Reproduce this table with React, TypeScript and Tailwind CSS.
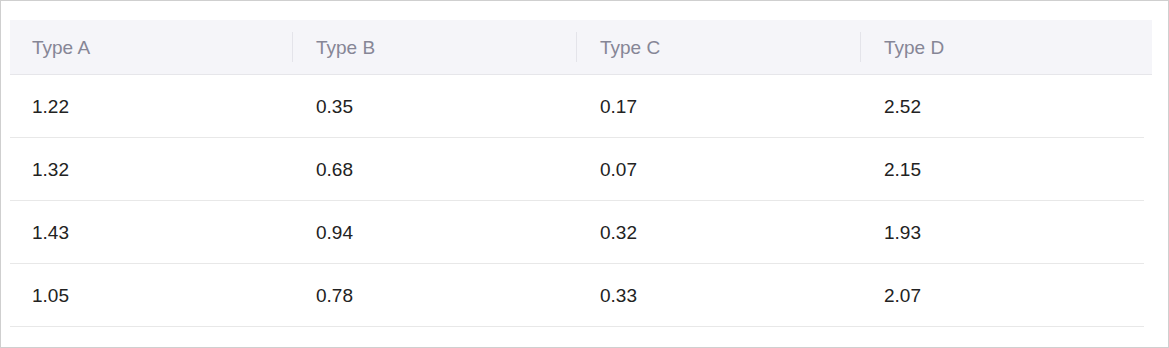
import React from 'react';

const columns = ['Type A', 'Type B', 'Type C', 'Type D'];

const rows: string[][] = [
  ['1.22', '0.35', '0.17', '2.52'],
  ['1.32', '0.68', '0.07', '2.15'],
  ['1.43', '0.94', '0.32', '1.93'],
  ['1.05', '0.78', '0.33', '2.07'],
];

const App: React.FC = () => {
  return (
    <div
      className="w-[1169px] h-[348px] border border-[#cfcfcf] bg-white pt-[19px] pl-[9px]"
      style={{ fontFamily: '"Liberation Sans", Arial, sans-serif' }}
    >
      {/* cabecera */}
      <div className="w-[1142px] h-[55px] bg-[#f5f5f9] border-b border-[#e6e6ea] grid grid-cols-[284px_284px_284px_1fr]">
        {columns.map((col, i) => (
          <div key={col} className="relative flex items-center pl-[22px] text-[19px] leading-none text-[#868696]">
            {col}
            {i < columns.length - 1 && (
              <span className="absolute right-[1px] top-[12px] w-px h-[30px] bg-[#e4e4ea]" />
            )}
          </div>
        ))}
      </div>

      {/* filas */}
      <div className="w-[1134px]">
        {rows.map((row, r) => (
          <div key={r} className="h-[63px] border-b border-[#e8e8e8] grid grid-cols-[284px_284px_284px_1fr]">
            {row.map((v, c) => (
              <div key={c} className="flex items-center pl-[22px] text-[19px] leading-none text-[#222222]">
                {v}
              </div>
            ))}
          </div>
        ))}
      </div>
    </div>
  );
};

export default App;
